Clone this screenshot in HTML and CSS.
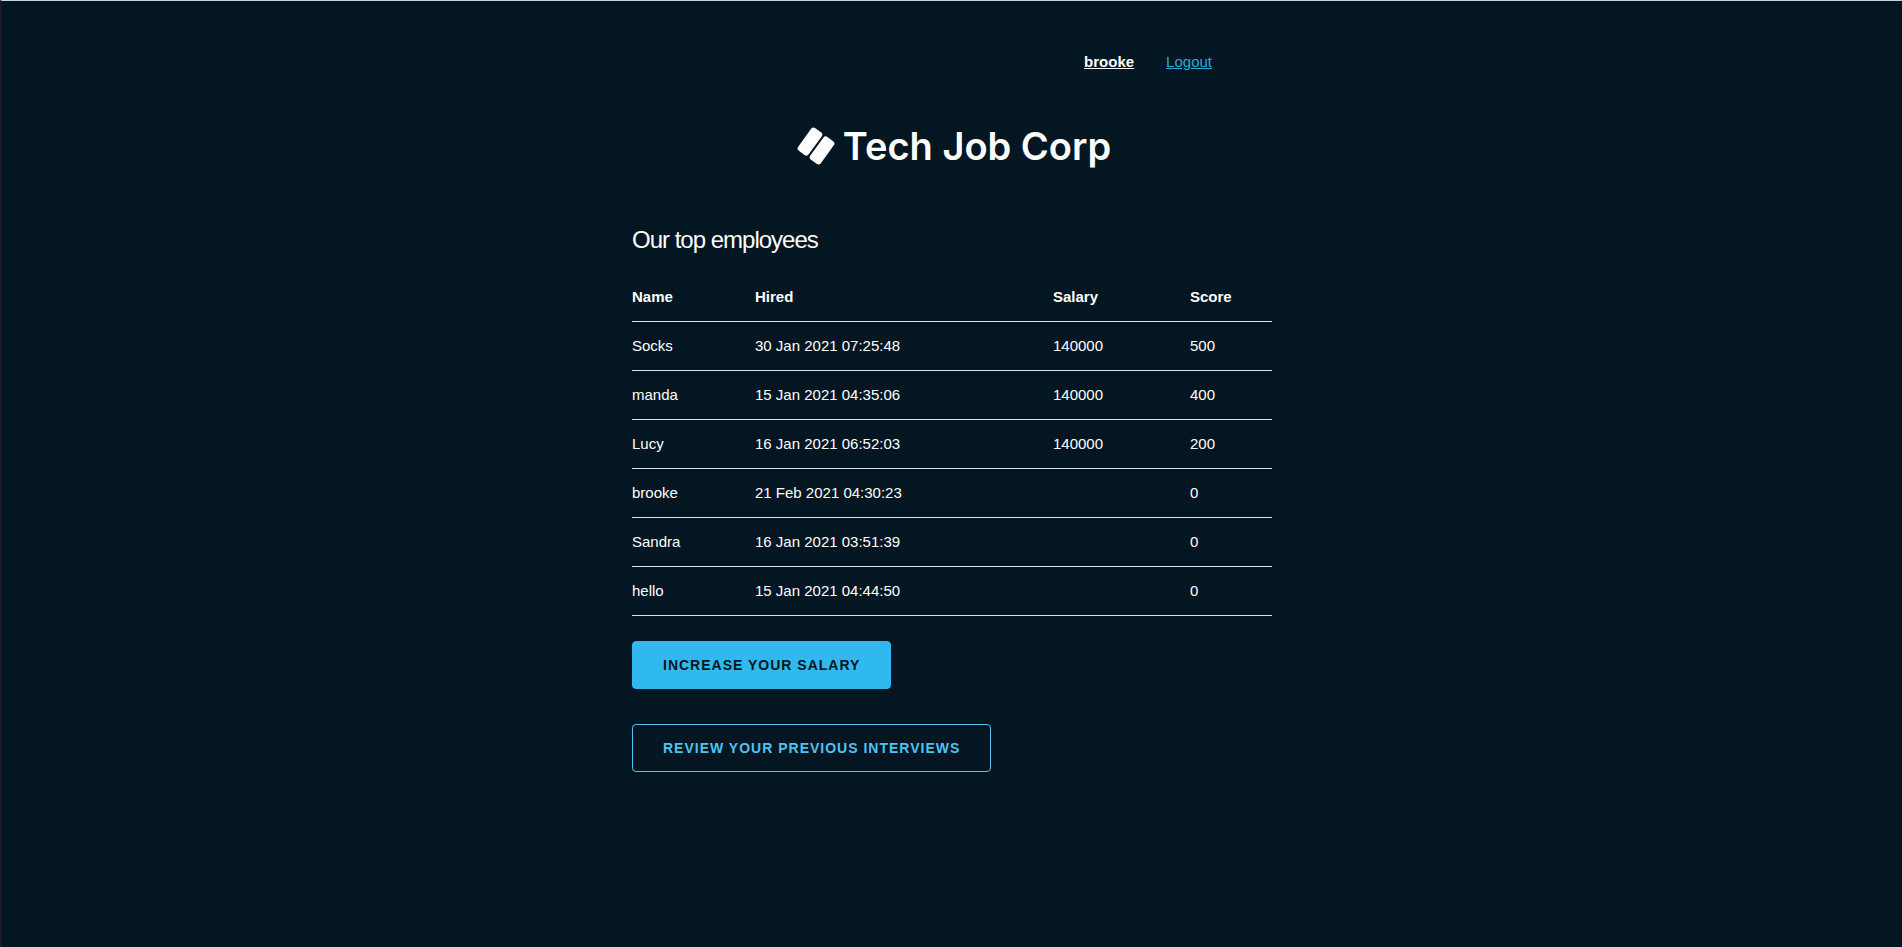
FILE: index.html
```
<!DOCTYPE html>
<html lang="en">
<head>
<meta charset="utf-8">
<title>Tech Job Corp</title>
<link rel="stylesheet" href="styles.css">
</head>
<body>
<div class="container">
  <nav class="nav">
    <a class="nav-user" href="#">brooke</a>
    <a class="nav-link" href="#">Logout</a>
  </nav>
  <header class="brand">
    <svg class="brand-mark" viewBox="0 0 38 38" aria-hidden="true">
      <g transform="rotate(36 19 19)">
        <rect x="5" y="5" width="13" height="28" rx="3"/>
        <rect x="20" y="5" width="13" height="28" rx="3"/>
      </g>
    </svg>
    <span class="brand-name">Tech Job Corp</span>
  </header>
  <main>
    <h1 class="title">Our top employees</h1>
    <table class="employees">
      <thead>
        <tr><th class="col-name">Name</th><th class="col-hired">Hired</th><th class="col-salary">Salary</th><th>Score</th></tr>
      </thead>
      <tbody>
        <tr><td>Socks</td><td>30 Jan 2021 07:25:48</td><td>140000</td><td>500</td></tr>
        <tr><td>manda</td><td>15 Jan 2021 04:35:06</td><td>140000</td><td>400</td></tr>
        <tr><td>Lucy</td><td>16 Jan 2021 06:52:03</td><td>140000</td><td>200</td></tr>
        <tr><td>brooke</td><td>21 Feb 2021 04:30:23</td><td></td><td>0</td></tr>
        <tr><td>Sandra</td><td>16 Jan 2021 03:51:39</td><td></td><td>0</td></tr>
        <tr><td>hello</td><td>15 Jan 2021 04:44:50</td><td></td><td>0</td></tr>
      </tbody>
    </table>
    <div class="actions">
      <button class="button button-primary" type="button">Increase your salary</button>
      <button class="button" type="button">Review your previous interviews</button>
    </div>
  </main>
</div>
</body>
</html>
```
FILE: styles.css
```
* { box-sizing: border-box; }
body {
  margin: 0;
  min-height: 100vh;
  border-top: 1px solid #c5d3d8;
  border-left: 2px solid #1c1a22;
  background: #031622;
  color: #fff;
  font: 15px/24px "Liberation Sans", Arial, sans-serif;
}
.container {
  max-width: 640px;
  margin: 0 auto;
  padding-top: 49px;
}
.nav {
  display: flex;
  justify-content: flex-end;
  gap: 32px;
  padding-right: 60px;
}
.nav-user { color: #fff; font-weight: 700; }
.nav-link { color: #1eaedb; }
.brand {
  display: flex;
  justify-content: center;
  align-items: center;
  gap: 8px;
  margin-top: 48px;
  padding-left: 4px;
}
.brand-mark { width: 38px; height: 38px; fill: #fff; }
.brand-name { font: 600 38px/48px Inter, sans-serif; }
.title {
  margin: 54px 0 17px;
  font-size: 24px;
  font-weight: 400;
  line-height: 32px;
  letter-spacing: -1px;
}
.employees {
  width: 100%;
  table-layout: fixed;
  border-collapse: separate;
  border-spacing: 0;
}
.employees th, .employees td {
  padding: 12px 15px;
  border-bottom: 1px solid #e1e1e1;
  text-align: left;
}
.employees th:first-child, .employees td:first-child { padding-left: 0; }
.col-name { width: 108px; }
.col-hired { width: 298px; }
.col-salary { width: 137px; }
.actions {
  display: flex;
  flex-direction: column;
  align-items: flex-start;
  gap: 35px;
  margin: 25px 0;
}
.button {
  height: 48px;
  padding: 0 30px;
  border: 1px solid #4fc3f0;
  border-radius: 4px;
  background: transparent;
  color: #4fc3f0;
  font: 700 14px/46px "Liberation Sans", Arial, sans-serif;
  letter-spacing: 1px;
  text-transform: uppercase;
  cursor: pointer;
}
.button-primary {
  border-color: #30b9ee;
  background: #30b9ee;
  color: #021622;
}
```
